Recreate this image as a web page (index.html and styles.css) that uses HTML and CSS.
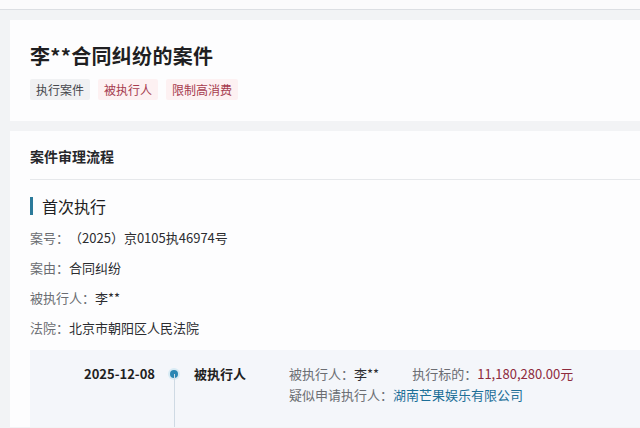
FILE: index.html
```html
<!DOCTYPE html>
<html lang="zh-CN">
<head>
  <meta charset="UTF-8">
  <title>案件详情</title>
  <link rel="stylesheet" href="styles.css">
</head>
<body>
  <div class="topbar"></div>
  <div class="page">
    <div class="card summary">
      <h1>李**合同纠纷的案件</h1>
      <div class="tags">
        <span class="tag">执行案件</span>
        <span class="tag red">被执行人</span>
        <span class="tag red">限制高消费</span>
      </div>
    </div>

    <div class="card flow">
      <div class="flow-head">案件审理流程</div>
      <div class="stage">首次执行</div>
      <div class="info">
        <div class="row"><span class="label">案号：</span>（2025）京0105执46974号</div>
        <div class="row"><span class="label">案由：</span>合同纠纷</div>
        <div class="row"><span class="label">被执行人：</span>李**</div>
        <div class="row"><span class="label">法院：</span>北京市朝阳区人民法院</div>
      </div>
      <div class="timeline">
        <div class="tl-date">2025-12-08</div>
        <div class="tl-axis"><span class="dot"></span></div>
        <div class="tl-title">被执行人</div>
        <div class="tl-detail">
          <div class="line">
            <span><span class="label">被执行人：</span>李**</span>
            <span class="amount"><span class="label">执行标的：</span><em>11,180,280.00元</em></span>
          </div>
          <div class="line"><span class="label">疑似申请执行人：</span><a href="#">湖南芒果娱乐有限公司</a></div>
        </div>
      </div>
    </div>
  </div>
</body>
</html>
```

FILE: styles.css
```css
html, body {
  margin: 0;
  height: 100%;
  overflow: hidden;
}
body {
  font-family: "Noto Sans CJK SC", "Noto Sans", sans-serif;
  background-color: #f2f3f5;
  color: #222;
  text-spacing-trim: space-all;
}
.topbar {
  height: 9px;
  background-color: #fbfbfc;
  border-bottom: 1px solid #dcdfe3;
}
.page {
  padding: 10px 0 0 10px;
}
.card {
  background-color: #fdfdfe;
  padding: 0 0 0 20px;
}
.summary {
  padding-top: 22px;
  padding-bottom: 21px;
  margin-bottom: 10px;
}
.summary h1 {
  font-size: 20px;
  line-height: 28px;
  margin: 0 0 9px;
  font-weight: bold;
  color: #1f1f22;
  letter-spacing: 0.3px;
}
.tags {
  display: flex;
  gap: 8px;
}
.tag {
  font-size: 12px;
  line-height: 21px;
  padding: 0 6px;
  border-radius: 2px;
  background-color: #f0f1f3;
  color: #45474c;
}
.tag.red {
  background-color: #fdf1f2;
  color: #a63b4e;
}
.flow {
  height: 296px;
  overflow: hidden;
}
.flow-head {
  font-size: 14px;
  font-weight: bold;
  height: 48px;
  line-height: 50px;
  border-bottom: 1px solid #e6e8eb;
  color: #26272b;
}
.stage {
  margin-top: 17px;
  font-size: 16px;
  line-height: 20px;
  padding-left: 9px;
  border-left: 3px solid #2b7a9a;
  color: #1f1f22;
  height: 18px;
  display: flex;
  align-items: center;
}
.info {
  margin-top: 8px;
  font-size: 13px;
  color: #2b2c30;
}
.row {
  line-height: 30px;
}
.label {
  color: #6b6d72;
}
.timeline {
  margin-top: 7px;
  background-color: #f4f6fa;
  display: grid;
  grid-template-columns: 125px 39px 95px 1fr;
  padding-top: 14px;
  height: 80px;
  font-size: 13px;
}
.tl-date {
  text-align: right;
  font-weight: bold;
  line-height: 20px;
  color: #1f1f22;
}
.tl-axis {
  position: relative;
}
.tl-axis::after {
  content: "";
  position: absolute;
  left: 19px;
  top: 10px;
  width: 1px;
  height: 80px;
  background-color: #cfdae4;
}
.dot {
  position: absolute;
  left: 15px;
  top: 6px;
  width: 8px;
  height: 8px;
  border-radius: 50%;
  background-color: #2a86b3;
  box-shadow: 0 0 0 2px #d8ebf4;
}
.tl-title {
  font-weight: bold;
  line-height: 20px;
  color: #1f1f22;
}
.tl-detail .line {
  line-height: 21px;
  color: #2b2c30;
}
.tl-detail .line:first-child {
  display: flex;
  gap: 33px;
  line-height: 20px;
}
.amount em {
  font-style: normal;
  color: #8e2a3d;
}
.tl-detail a {
  color: #1d6f98;
  text-decoration: none;
}
```
